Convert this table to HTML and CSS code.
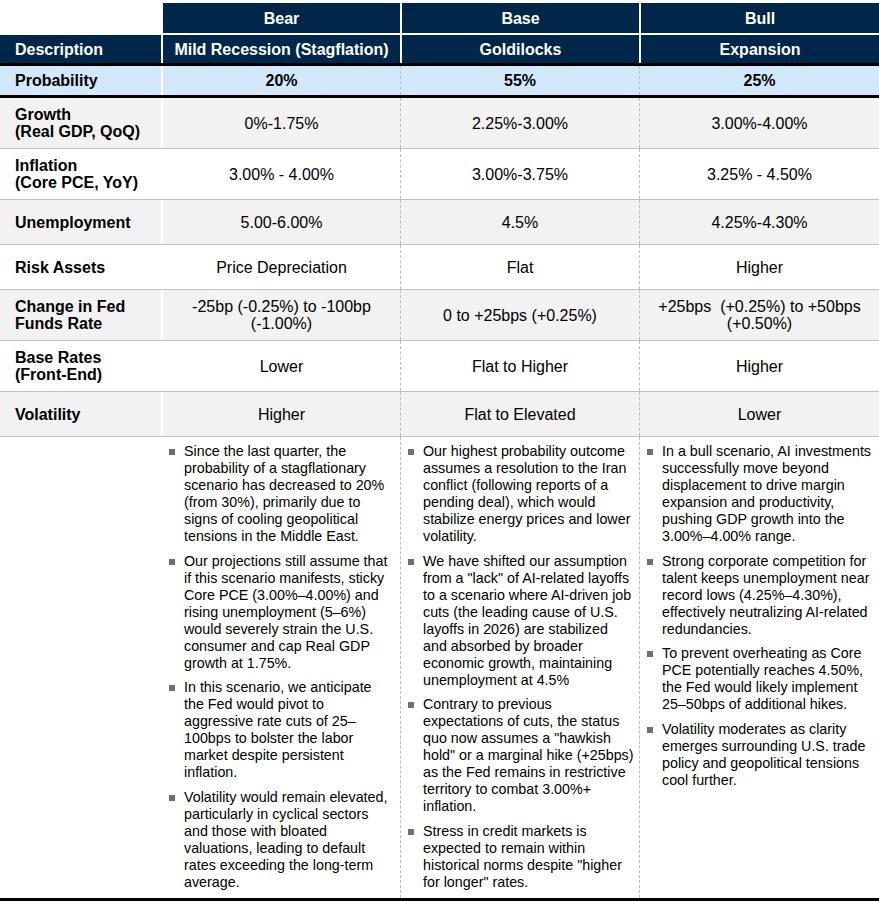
FILE: index.html
```html
<!DOCTYPE html>
<html lang="en">
<head>
  <meta charset="UTF-8" />
  <meta name="viewport" content="width=device-width, initial-scale=1.0"/>
  <title>Economic Scenarios</title>
  <link rel="stylesheet" href="styles.css">
</head>
<body>
  <div class="scenarios">
    <!-- Header -->
    <div class="row head-top">
      <div class="cell blank"></div>
      <div class="cell">Bear</div>
      <div class="cell">Base</div>
      <div class="cell">Bull</div>
    </div>
    <div class="row head-sub">
      <div class="cell">Description</div>
      <div class="cell">Mild Recession (Stagflation)</div>
      <div class="cell">Goldilocks</div>
      <div class="cell">Expansion</div>
    </div>

    <div class="row prob">
      <div class="cell">Probability</div>
      <div class="cell">20%</div>
      <div class="cell">55%</div>
      <div class="cell">25%</div>
    </div>

    <!-- Metrics -->
    <div class="row metric shaded">
      <div class="cell">Growth<br>(Real GDP, QoQ)</div>
      <div class="cell">0%-1.75%</div>
      <div class="cell">2.25%-3.00%</div>
      <div class="cell">3.00%-4.00%</div>
    </div>
    <div class="row metric">
      <div class="cell">Inflation<br>(Core PCE, YoY)</div>
      <div class="cell">3.00% - 4.00%</div>
      <div class="cell">3.00%-3.75%</div>
      <div class="cell">3.25% - 4.50%</div>
    </div>
    <div class="row metric shaded">
      <div class="cell">Unemployment</div>
      <div class="cell">5.00-6.00%</div>
      <div class="cell">4.5%</div>
      <div class="cell">4.25%-4.30%</div>
    </div>
    <div class="row metric">
      <div class="cell">Risk Assets</div>
      <div class="cell">Price Depreciation</div>
      <div class="cell">Flat</div>
      <div class="cell">Higher</div>
    </div>
    <div class="row metric shaded">
      <div class="cell">Change in Fed Funds Rate</div>
      <div class="cell">-25bp (-0.25%) to -100bp (-1.00%)</div>
      <div class="cell">0 to +25bps (+0.25%)</div>
      <div class="cell">+25bps&nbsp; (+0.25%) to +50bps (+0.50%)</div>
    </div>
    <div class="row metric">
      <div class="cell">Base Rates<br>(Front-End)</div>
      <div class="cell">Lower</div>
      <div class="cell">Flat to Higher</div>
      <div class="cell">Higher</div>
    </div>
    <div class="row metric shaded">
      <div class="cell">Volatility</div>
      <div class="cell">Higher</div>
      <div class="cell">Flat to Elevated</div>
      <div class="cell">Lower</div>
    </div>

    <!-- Commentary -->
    <div class="row notes">
      <div class="cell"></div>
      <ul class="cell notes-bear">
        <li>Since the last quarter, the probability of a stagflationary scenario has decreased to 20% (from 30%), primarily due to signs of cooling geopolitical tensions in the Middle East.</li>
        <li>Our projections still assume that if this scenario manifests, sticky Core PCE (3.00%–4.00%) and rising unemployment (5–6%) would severely strain the U.S. consumer and cap Real GDP growth at 1.75%.</li>
        <li>In this scenario, we anticipate the Fed would pivot to aggressive rate cuts of 25–100bps to bolster the labor market despite persistent inflation.</li>
        <li>Volatility would remain elevated, particularly in cyclical sectors and those with bloated valuations, leading to default rates exceeding the long-term average.</li>
      </ul>
      <ul class="cell notes-base">
        <li>Our highest probability outcome assumes a resolution to the Iran conflict (following reports of a pending deal), which would stabilize energy prices and lower volatility.</li>
        <li>We have shifted our assumption from a "lack" of AI-related layoffs to a scenario where AI-driven job cuts (the leading cause of U.S. layoffs in 2026) are stabilized and absorbed by broader economic growth, maintaining unemployment at 4.5%</li>
        <li>Contrary to previous expectations of cuts, the status quo now assumes a "hawkish hold" or a marginal hike (+25bps) as the Fed remains in restrictive territory to combat 3.00%+ inflation.</li>
        <li>Stress in credit markets is expected to remain within historical norms despite "higher for longer" rates.</li>
      </ul>
      <ul class="cell notes-bull">
        <li>In a bull scenario, AI investments successfully move beyond displacement to drive margin expansion and productivity, pushing GDP growth into the 3.00%–4.00% range.</li>
        <li>Strong corporate competition for talent keeps unemployment near record lows (4.25%–4.30%), effectively neutralizing AI-related redundancies.</li>
        <li>To prevent overheating as Core PCE potentially reaches 4.50%, the Fed would likely implement 25–50bps of additional hikes.</li>
        <li>Volatility moderates as clarity emerges surrounding U.S. trade policy and geopolitical tensions cool further.</li>
      </ul>
    </div>
  </div>
</body>
</html>
```

FILE: styles.css
```css
body {
  font-family: 'Liberation Sans', Arial, sans-serif;
  margin: 0;
  padding: 0;
  color: #000;
  background-color: #fff;
}

.scenarios {
  width: 879px;
  padding-top: 3px;
}

.row {
  display: grid;
  grid-template-columns: 163px 237px 239px 240px;
}

.cell {
  box-sizing: border-box;
  display: flex;
  align-items: center;
  justify-content: center;
  text-align: center;
  font-size: 16px;
  line-height: 17px;
}

.row .cell:first-child {
  justify-content: flex-start;
  text-align: left;
  padding-left: 15px;
  border-right: 2px solid #fff;
  font-weight: bold;
}

.row .cell:nth-child(n+3) {
  border-left: 1px dashed #bdbdbd;
}

/* Header */
.head-top,
.head-sub {
  color: white;
  font-weight: bold;
}

.head-top .cell,
.head-sub .cell {
  background-color: #00264a;
  font-weight: bold;
}

.head-top .cell:nth-child(n+3),
.head-sub .cell:nth-child(n+3) {
  border-left: 2px solid #fff;
}

.head-top {
  height: 30px;
  margin-bottom: 2px;
}

.head-top .blank {
  background-color: transparent;
}

.head-sub {
  height: 31px;
  border-bottom: 3px solid #000;
  box-sizing: border-box;
}

.prob {
  height: 32px;
  border-bottom: 3px solid #000;
  box-sizing: border-box;
}

.prob .cell {
  background-color: #d4e8fb;
  font-weight: bold;
}

/* Metric rows */
.metric {
  min-height: 45px;
  border-bottom: 1px solid #c4c4c4;
  box-sizing: border-box;
}

.metric .cell {
  padding: 8px 8px;
}

.metric .cell:first-child {
  padding-left: 15px;
}

.shaded .cell {
  background-color: #f2f2f2;
}

/* Commentary */
.notes {
  border-bottom: 3px solid #000;
}

.notes ul {
  display: block;
  list-style: none;
  margin: 0;
  padding: 6px 4px 7px 22px;
  text-align: left;
  font-size: 14.3px;
  line-height: 17px;
}

.notes .notes-bear {
  padding-left: 21px;
  padding-right: 6px;
}

.notes .notes-bull {
  padding-right: 3px;
}

.notes li {
  position: relative;
  margin-bottom: 7.5px;
}

.notes li:last-child {
  margin-bottom: 0;
}

.notes li::before {
  content: "";
  position: absolute;
  left: -15px;
  top: 6px;
  width: 6px;
  height: 6px;
  background-color: #6f6f6f;
}
```
